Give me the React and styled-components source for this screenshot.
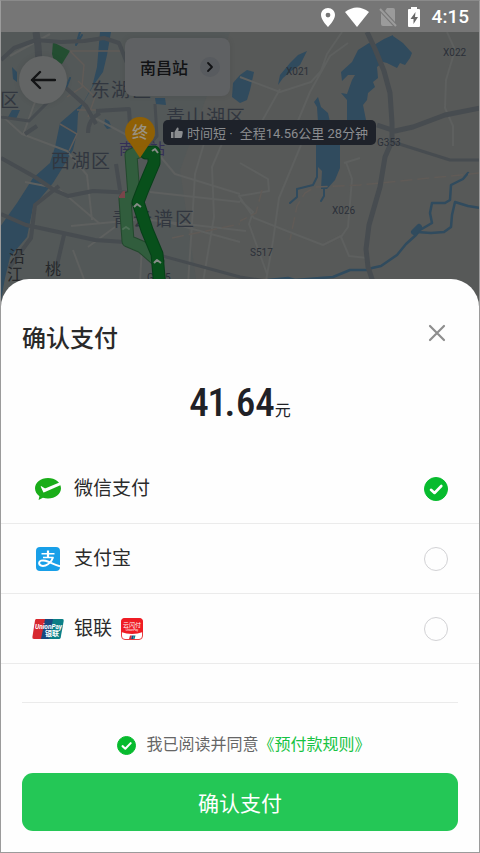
import React, { useState } from "react";
import styled, { createGlobalStyle } from "styled-components";

const GlobalStyle = createGlobalStyle`
  *, *::before, *::after { box-sizing: border-box; }
  body {
    margin: 0;
    background: #fff;
    color: #26272b;
    font-family: Roboto, "Noto Sans CJK SC", sans-serif;
  }
  button, input { font: inherit; margin: 0; padding: 0; border: 0; }
`;

const Screen = styled.main`
  display: flex;
  flex-direction: column;
  min-height: 100vh;
  background: #fefefe;
  border: 1px solid #9b9b9b;
  border-top-color: #8a8a8a;
`;

const StatusBar = styled.header`
  display: flex;
  align-items: center;
  justify-content: flex-end;
  gap: 10px;
  height: 31px;
  padding-right: 10px;
  background: #767676;
  color: #fff;
`;

const StatusIcons = styled.div`
  display: flex;
  align-items: center;
  gap: 10px;
  margin-right: 1px;
`;

const StatusIcon = styled.svg`
  display: block;
  fill: currentColor;
`;

const Clock = styled.time`
  font-size: 19px;
  line-height: 24px;
  font-weight: 500;
`;

const MapArea = styled.section`
  position: relative;
  height: 274px;
  background: #565958;
  overflow: hidden;
`;

const MapDrawing = styled.svg`
  display: block;
  width: 100%;
  height: 100%;
  font-family: Roboto, "Noto Sans CJK SC", sans-serif;
`;

const BackButton = styled.button`
  position: absolute;
  top: 24px;
  left: 18px;
  display: grid;
  place-items: center;
  width: 48px;
  height: 48px;
  border-radius: 50%;
  background: #636565;
  color: #131415;
  box-shadow: 0 0 6px rgba(0, 0, 0, 0.08);
`;

const StationButton = styled.button`
  position: absolute;
  top: 6px;
  left: 124px;
  display: flex;
  align-items: center;
  gap: 12px;
  height: 58px;
  padding: 0 10px 0 15px;
  border-radius: 8px;
  background: #5f6163;
  color: #111214;
  font-size: 16px;
  font-weight: 500;
  box-shadow: 0 0 6px rgba(0, 0, 0, 0.08);
`;

const Chevron = styled.span`
  display: grid;
  place-items: center;
  width: 20px;
  height: 20px;
  border-radius: 50%;
  background: #585b5f;
`;

const RouteTag = styled.p`
  position: absolute;
  top: 88px;
  left: 162px;
  display: flex;
  align-items: center;
  gap: 4px;
  height: 25px;
  margin: 0;
  padding: 0 8px;
  border-radius: 5px;
  background: #1e222a;
  color: #8b8d90;
  font-size: 13px;
  white-space: nowrap;
`;

const RouteDistance = styled.span`
  margin-left: 3px;
`;

const Sheet = styled.section`
  position: relative;
  flex: 1;
  margin-top: -27px;
  padding-bottom: 20px;
  border-radius: 28px 28px 0 0;
  background: #fefefe;
`;

const SheetHeader = styled.div`
  display: flex;
  justify-content: space-between;
  padding: 44px 33px 0 21px;
`;

const Title = styled.h1`
  margin: 0;
  font-size: 24px;
  line-height: 32px;
  font-weight: 500;
  color: #2a2a2a;
`;

const CloseButton = styled.button`
  display: grid;
  place-items: center;
  width: 18px;
  height: 20px;
  background: none;
  color: #8e8e8e;
`;

const Amount = styled.p`
  display: flex;
  justify-content: center;
  align-items: baseline;
  height: 48px;
  margin: 24px 0 27px;
  font-family: "Roboto Condensed", Roboto, "Noto Sans CJK SC", sans-serif;
  font-size: 39px;
  font-variant-numeric: proportional-nums;
  line-height: 48px;
  font-weight: 500;
  color: #202126;
`;

const Unit = styled.span`
  font-size: 16px;
  line-height: 20px;
  font-weight: 400;
`;

const Methods = styled.fieldset`
  margin: 0;
  padding: 0;
  border: 0;
`;

const MethodRow = styled.label`
  display: flex;
  align-items: center;
  height: 70px;
  padding: 0 31px;
  border-bottom: 1px solid #ebebeb;
  font-size: 19px;
  line-height: 28px;
  color: #2b2b2b;
`;

const MethodIcon = styled.span`
  display: grid;
  place-items: center;
  width: 32px;
  margin-right: 10px;
`;

const MethodBadge = styled.span`
  display: grid;
  margin-left: 9px;
`;

const Tick = styled.span`
  display: grid;
  place-items: center;
  width: ${(p) => p.$size}px;
  height: ${(p) => p.$size}px;
  margin-left: ${(p) => (p.$end ? "auto" : "0")};

  > * { grid-area: 1 / 1; }
  > svg { width: 100%; height: 100%; pointer-events: none; z-index: 1; }
`;

const TickInput = styled.input`
  appearance: none;
  width: 100%;
  height: 100%;
  border: 1px solid #d2d2d5;
  border-radius: 50%;
  background: #fefefe;

  &:checked {
    border-color: #07bb2e;
    background: #07bb2e;
  }
`;

const Divider = styled.hr`
  height: 1px;
  margin: 38px 21px 0;
  border: 0;
  background: #ebebeb;
`;

const Agreement = styled.div`
  display: flex;
  justify-content: center;
  align-items: center;
  margin: 30px 0 16px;
  padding-left: 8px;
  font-size: 16px;
  line-height: 24px;
  color: #666;
`;

const AgreementLabel = styled.label`
  display: flex;
  align-items: center;
  gap: 10px;
`;

const RulesLink = styled.a`
  color: #17c343;
  text-decoration: none;
`;

const PayButton = styled.button`
  display: block;
  width: calc(100% - 42px);
  height: 58px;
  margin: 0 auto;
  border-radius: 11px;
  background: #24c756;
  color: #fff;
  font-size: 21px;
`;

function CheckMark() {
  return (
    <svg viewBox="0 0 24 24" fill="none" stroke="#fff" strokeWidth="2.6" strokeLinecap="round" strokeLinejoin="round" aria-hidden="true">
      <path d="M7 12.8 10.5 16 17.3 9" />
    </svg>
  );
}

function WeChatPayLogo() {
  return (
    <svg width="28" height="24" viewBox="0 0 28 24" aria-hidden="true">
      <path fill="#1aad19" d="M14 1C6.700 1 1 5.500 1 11.300c0 3.200 1.700 6 4.400 7.900L4.600 23l4.300-2.200c1.600.5 3.300.8 5.100.8 7.300 0 13-4.500 13-10.300S21.300 1 14 1Z" />
      <path fill="#fff" d="M10.400 15.300c-.5.200-.9.100-1.200-.4L6.800 9.700c-.2-.5.200-.8.600-.5l2.900 1.900c.4.200.8.300 1.300.1L26 5.300l.9 2.700-16.500 7.300Z" />
    </svg>
  );
}

function AlipayLogo() {
  return (
    <svg width="24" height="24" viewBox="0 0 24 24" aria-hidden="true">
      <rect width="24" height="24" rx="4" fill="#189fe8" />
      <g fill="none" stroke="#fff">
        <path strokeWidth="1.500" d="M5.500 6.700h13M7 10.500h10.500" />
        <path strokeWidth="2.200" d="M12 3.500v7" />
        <path strokeWidth="2" d="M17 10.300c-1.200 3.500-4 7.100-7.500 8.200-3.600 1.100-6.500-.2-6.400-2.500.1-2.400 3.400-3.100 6.400-2.200 4.300 1.200 8 3.800 14.500 5.400" />
      </g>
    </svg>
  );
}

function UnionPayLogo() {
  return (
    <svg width="32" height="20" viewBox="0 0 32 20" aria-hidden="true">
      <path fill="#d7282f" d="M4 0h10l-4 20H2Q0 20 .4 18L3 1.500Q3.300 0 4 0Z" />
      <path fill="#17487f" d="M13 0h9l-4 20H9Z" />
      <path fill="#0b7f86" d="M21 0h9.500Q32 0 31.700 2l-3 16.500Q28.400 20 27 20H17Z" />
      <g fill="#fff" fontFamily="Roboto, 'Noto Sans CJK SC', sans-serif" fontWeight="700">
        <text x="3" y="10" fontSize="6.500" fontStyle="italic">UnionPay</text>
        <text x="13" y="17" fontSize="7">银联</text>
      </g>
    </svg>
  );
}

function QuickPassLogo() {
  return (
    <svg width="22" height="22" viewBox="0 0 22 22" aria-hidden="true">
      <rect x=".5" y=".5" width="21" height="21" rx="3.500" fill="#fff" stroke="#e83b3f" />
      <path fill="#ef1c24" d="M4 0h14q4 0 4 4v10Q11 18 0 14V4Q0 0 4 0Z" />
      <g fill="#fff" textAnchor="middle" fontFamily="Roboto, 'Noto Sans CJK SC', sans-serif">
        <text x="11" y="9" fontSize="6">云闪付</text>
        <text x="11" y="13" fontSize="3">UnionPay</text>
      </g>
      <path fill="#d7282f" d="M9 17.500h2l-1 3.500H8Z" />
      <path fill="#17487f" d="M11 17.500h2L12 21h-2Z" />
      <path fill="#0b7f86" d="M13 17.500h1.500l-1 3.500H12Z" />
    </svg>
  );
}

function CityMap() {
  return (
    <MapDrawing viewBox="1 32 478 274" preserveAspectRatio="xMidYMin slice" role="img" aria-label="南昌地图">
      <path fill="#535858" d="M0 32h480v274H0Z" />
      <path fill="#575958" d="M230 32h250v274H200L180 170Z" />

      <g fill="#304b5e">
        <path d="M100 32h11l-4 23-4 17-8 11-10 17-7 13-1 20-4 17-10 17-10 16-20 24-6 30-17 20-5 21-5 28H0v-79l17-24 16-25 17-15 5-16 5-24 23-20 9-16 5-20Z" />
        <path d="M393 32l0 4 10 7 9 10-2 5-5 7-5-2-3 5-10-5-4-1-6 5 1 11-5 4 2 5-7 6-1 7-4 5 3 15h-19v-20l-6-7 6 1 5-14 3-5h-7l-6 6-1-9 11-10 6-12 11-7 5 2 10-6 9-4Z" />
        <path d="M307 51l-7 14-10 7-7 6-5 7 2-10 10-12 8-8Z" />
        <path d="M247 70l7 2-4 18-3 10-7 3-8-6 1-14 7-8Z" />
        <path d="M318 97l3 10 7 6 2 9h-12l-1-15-3-5Z" />
        <path d="M318 143h22l0 25-5 12-8 9-6 0 1-18-4-4Z" />
        <path d="M12 67l5 5 0 10-4-3ZM12 110h8l-4 9-8-2ZM105 119l4 2 3 7-5 1-3-4ZM155 98l10 0 1 7-10-1Z" />
      </g>
      <g fill="none" stroke="#304b5e" strokeLinejoin="round" strokeLinecap="round">
        <path strokeWidth="2.500" d="M468 173l-5 6-12 6-1 15-5 3h-13l-2 10 2 10-12 7-4 5-10 9-9 11-16 11-9 2-4 2h-18l-17 7-38 3-7-2-20 2" />
        <path strokeWidth="2.500" d="M480 208l-12-2-13-4-3 13-1 12-7 5-13 1-14-1" />
        <path strokeWidth="2" d="M317 143v34l-4 8-16 4v8l-7 6M324 180v16l-3 5M80 32l-4 13 6-10M66 88l4-10" />
        <path strokeWidth="6" d="M414 232l5-5" />
      </g>
      <path fill="#234e31" d="M53 42l17 9-8 13-8-3-2-7Z" />

      <g fill="none" stroke="#5e605f" strokeWidth="2" strokeLinejoin="round">
        <path d="M240 77l40 15 31-10 10-11 6-17 15-22M290 140l20-48 20-36 18-13M252 139l28-50M447 32l8 18-9 30-1 28 8 18v20M240 163l28 16 1 12-30 5 15 22 38 15 31 12 20-10M240 200l13 12-4 12 18 50M301 145l-22 53-6 43-7 40M346 162l6 17-4 48-7 10 8 19 18 2M360 158l-16 5" />
        <path d="M155 150l20 24 65 20M150 192l90 10M142 219l104 12M205 140l-10 34-3 50-4 60M224 139l-12 28 2 50-11 65M160 220l80 22" />
        <path d="M1 115l21 19 45 17 20 24 5 45M10 56l40-22M43 80l-20 55M93 117l43 23M71 226l64-6M60 190l40 34M25 182l31 6M88 247l27-20M73 250l12 32M142 245l-2 38" />
      </g>
      <g fill="none" stroke="#605b57" strokeWidth="1.500">
        <path d="M70 51l14 14-2 22-15 10M70 51h53M78 81l17 16-7 20M60 124l17 10-8 17M77 110h44" />
        <path strokeDasharray="12 5" d="M480 173l-120 12-45 2-10 6-8 13-7 34M172 238l68-14M262 190l-6 23-16 8" />
      </g>
      <g fill="none" stroke="#474c50" strokeLinejoin="round">
        <path strokeWidth="7" d="M36 32l2 14 1 18" />
        <path strokeWidth="4" d="M36 40l25 2 23-1 20-3 15 5 8 20M36 40L14 48 1 60M66 88l20 18 10 18M1 158l34 19 19 13 14 6 25-5 42 2M1 214l25 11 37 8 32 7 45 3M59 186l-24 19-4 33-22 30M64 235l-7 30M96 111l33-2 4 65 2 14M100 113q-12 6-12 20M116 164l4 26M25 134l12-8" />
        <path strokeWidth="3" d="M155 104l2 32-15 18M133 245l26 10 81 22 40 6M64 86l-35 35-28-4" />
        <path strokeWidth="5" d="M367 32l8 17 9 22 6 22 2 30 0 18-7 16-5 30-11 38-3 24 2 18 6 18M480 108l-35 7-32 12-18 4-18-6" />
        <path strokeWidth="3" d="M393 142l57 18h30" />
      </g>

      <g fill="#31363f" fontSize="19">
        <text x="0" y="107">区</text>
        <text x="91" y="97">东</text>
        <text x="111" y="97">湖</text>
        <text x="132" y="97">区</text>
        <text x="166" y="124" letterSpacing="1">青山湖区</text>
        <text x="51" y="168" letterSpacing="1">西湖区</text>
        <text x="112" y="226" letterSpacing="2">青云谱区</text>
      </g>
      <g fill="#25272a" fontSize="16">
        <text x="9" y="262">沿</text>
        <text x="7" y="280">江</text>
        <text x="45" y="275">桃</text>
      </g>
      <g fontSize="15" fill="#342f57">
        <text x="119" y="154">南</text>
        <text x="150" y="154">站</text>
      </g>
      <g fill="#2b3038" fontSize="10">
        <text x="443" y="56">X022</text>
        <text x="286" y="75">X021</text>
        <text x="377" y="146">G353</text>
        <text x="332" y="214">X026</text>
        <text x="250" y="256">S517</text>
        <text x="147" y="281">G105</text>
      </g>

      <g fill="none" strokeLinejoin="round" strokeLinecap="round">
        <path stroke="#23482d" strokeWidth="13" d="M138 152l-7 3 3 41-9 3 3 42 14 6 16 14" />
        <path stroke="#315d3d" strokeWidth="11" d="M138 152l-7 3 3 41-9 3 3 42 14 6 16 14" />
        <path stroke="#073f18" strokeWidth="13" d="M146 153l8-1 0 11-11 26-5 13 9 28 10 24 3 34" />
        <path stroke="#08501b" strokeWidth="11" d="M146 153l8-1 0 11-11 26-5 13 9 28 10 24 3 34" />
        <path stroke="#858b86" strokeWidth="2" strokeLinecap="butt" d="M152 151l3-2 3 4M134 207l3-3 4 3M154 263l3-3 4 3" />
        <path stroke="#4d7056" strokeWidth="2" d="M123 229l3-2 3 2" />
      </g>
      <path d="M119 196l4-5h2v7h-6Z" fill="#79454a" />
      <path d="M130 143l10 15 10-15Z" fill="#8f6005" />
      <circle cx="140" cy="132" r="15" fill="#8f6005" />
      <text x="140" y="138" textAnchor="middle" fontSize="16" fontWeight="500" fill="#999282">终</text>
    </MapDrawing>
  );
}

const methods = [
  { id: "wechat", name: "微信支付", Logo: WeChatPayLogo },
  { id: "alipay", name: "支付宝", Logo: AlipayLogo },
  { id: "unionpay", name: "银联", Logo: UnionPayLogo, Badge: QuickPassLogo },
];

export default function App() {
  const [method, setMethod] = useState("wechat");
  const [agreed, setAgreed] = useState(true);

  return (
    <>
      <GlobalStyle />
      <Screen>
        <StatusBar>
          <StatusIcons>
            <StatusIcon width="14" height="20" viewBox="0 0 14 20" aria-hidden="true">
              <path fillRule="evenodd" d="M7 1C3.100 1 0 4 0 8c0 5 7 12 7 12s7-7 7-12c0-4-3.100-7-7-7Zm0 4.700a2.400 2.400 0 1 1 0 4.800 2.400 2.400 0 0 1 0-4.800Z" />
            </StatusIcon>
            <StatusIcon width="24" height="20" viewBox="0 0 24 20" aria-hidden="true">
              <path d="M0 5Q12-4 24 5L12 20Z" />
            </StatusIcon>
            <StatusIcon width="18" height="20" viewBox="0 0 18 20" aria-hidden="true">
              <path fill="#9b9b9b" d="M8 1h6q2 0 2 2v12L6 4ZM2 6l12 13H4q-2 0-2-2Z" />
              <path stroke="#9b9b9b" strokeWidth="2" d="M1 2l16 17" />
            </StatusIcon>
            <StatusIcon width="14" height="20" viewBox="0 0 14 20" aria-hidden="true">
              <path d="M4 0h6v2h2q1 0 1 1v16q0 1-1 1H2q-1 0-1-1V3q0-1 1-1h2Z" />
              <path fill="#686868" d="M8.500 5 3.500 12h3v5l4.500-7H8Z" />
            </StatusIcon>
          </StatusIcons>
          <Clock>4:15</Clock>
        </StatusBar>

        <MapArea>
          <CityMap />
          <BackButton type="button" aria-label="返回">
            <svg width="26" height="20" viewBox="0 0 26 20" fill="none" stroke="currentColor" strokeWidth="2.400" strokeLinecap="round" strokeLinejoin="round" aria-hidden="true">
              <path d="M25 10H2M10 2l-8 8 8 8" />
            </svg>
          </BackButton>
          <StationButton type="button">
            南昌站
            <Chevron>
              <svg width="8" height="12" viewBox="0 0 8 12" fill="none" stroke="currentColor" strokeWidth="1.800" strokeLinecap="round" strokeLinejoin="round" aria-hidden="true">
                <path d="M2 2l4 4-4 4" />
              </svg>
            </Chevron>
          </StationButton>
          <RouteTag>
            <svg width="12" height="12" viewBox="0 0 12 12" fill="currentColor" aria-hidden="true">
              <path d="M0 5h2.500v6H0ZM3.500 5 6 .8Q6.500 0 7.300.8q.7.700 0 3.200h3.200q1.500 0 1.300 1.400l-.8 4.300Q10.700 11 9.500 11h-6Z" />
            </svg>
            <span>时间短 ·</span>
            <RouteDistance>全程14.56公里 28分钟</RouteDistance>
          </RouteTag>
        </MapArea>

        <Sheet>
          <SheetHeader>
            <Title>确认支付</Title>
            <CloseButton type="button" aria-label="关闭">
              <svg width="18" height="18" viewBox="0 0 18 18" fill="none" stroke="currentColor" strokeWidth="2.200" strokeLinecap="round" aria-hidden="true">
                <path d="M2 2l14 14M16 2 2 16" />
              </svg>
            </CloseButton>
          </SheetHeader>

          <Amount>
            41.64<Unit>元</Unit>
          </Amount>

          <Methods aria-label="支付方式">
            {methods.map(({ id, name, Logo, Badge }) => (
              <MethodRow key={id}>
                <MethodIcon><Logo /></MethodIcon>
                {name}
                {Badge && <MethodBadge><Badge /></MethodBadge>}
                <Tick $size={24} $end>
                  <TickInput type="radio" name="method" value={id} checked={method === id} onChange={() => setMethod(id)} />
                  {method === id && <CheckMark />}
                </Tick>
              </MethodRow>
            ))}
          </Methods>

          <Divider />

          <Agreement>
            <AgreementLabel>
              <Tick $size={19}>
                <TickInput type="checkbox" checked={agreed} onChange={(e) => setAgreed(e.target.checked)} />
                {agreed && <CheckMark />}
              </Tick>
              我已阅读并同意
            </AgreementLabel>
            <RulesLink href="#rules">《预付款规则》</RulesLink>
          </Agreement>
          <PayButton type="button">确认支付</PayButton>
        </Sheet>
      </Screen>
    </>
  );
}
